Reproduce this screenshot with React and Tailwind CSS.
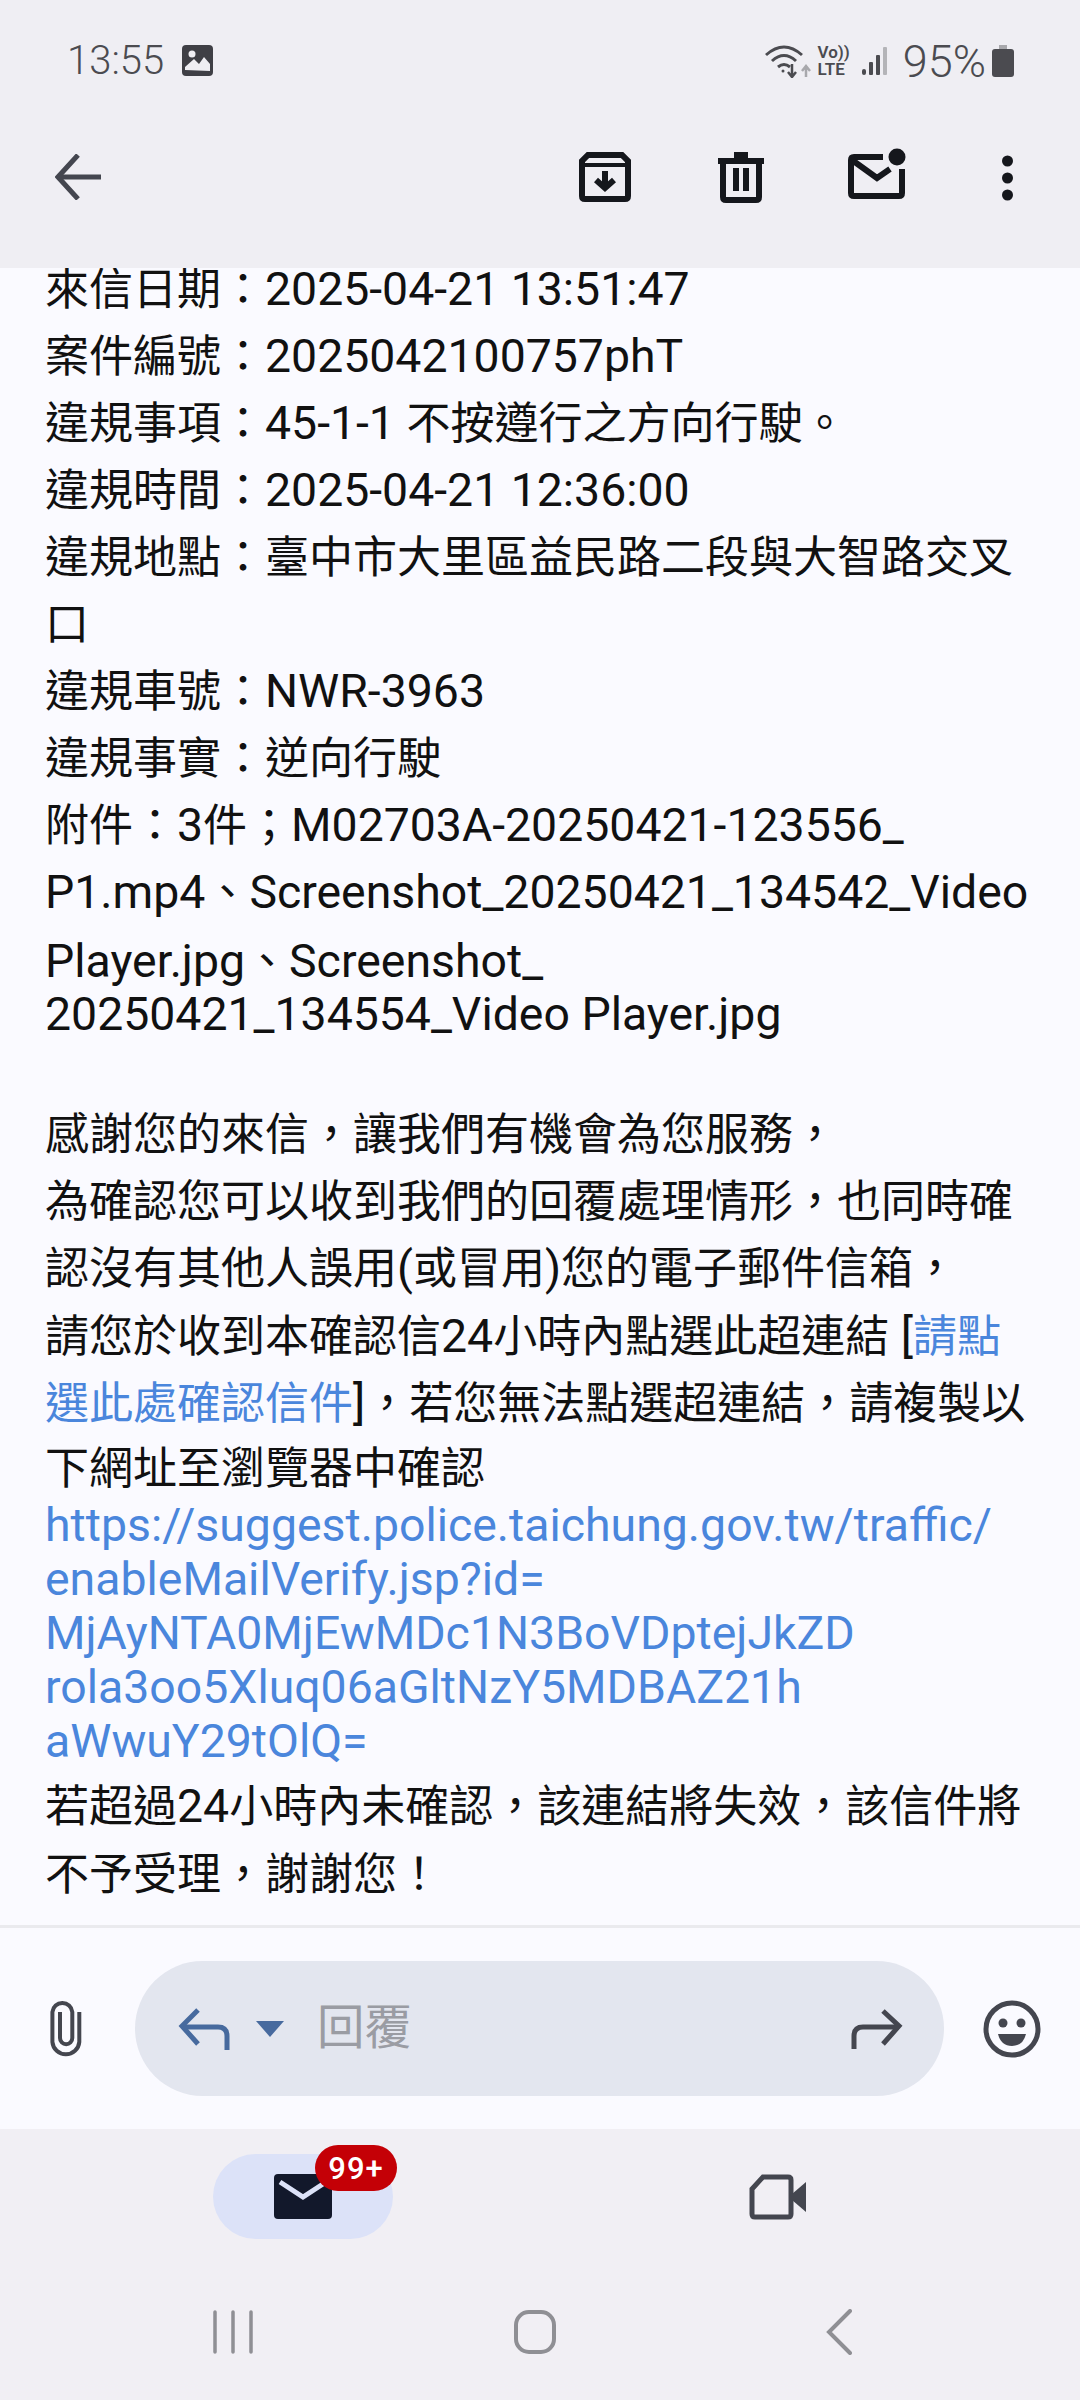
import React from 'react';

const lines = [
  { h: 'h-[67px]', t: '來信日期：2025-04-21 13:51:47' },
  { h: 'h-[67px]', t: '案件編號：2025042100757phT' },
  { h: 'h-[67px]', t: '違規事項：45-1-1 不按遵行之方向行駛。' },
  { h: 'h-[67px]', t: '違規時間：2025-04-21 12:36:00' },
  { h: 'h-[67px]', t: '違規地點：臺中市大里區益民路二段與大智路交叉' },
  { h: 'h-[67px]', t: '口' },
  { h: 'h-[67px]', t: '違規車號：NWR-3963' },
  { h: 'h-[67px]', t: '違規事實：逆向行駛' },
  { h: 'h-[67px]', t: '附件：3件；M02703A-20250421-123556_' },
  { h: 'h-[67px]', t: 'P1.mp4、Screenshot_20250421_134542_Video' },
  { h: 'h-[71px]', t: 'Player.jpg、Screenshot_' },
  { h: 'h-[36px]', t: '20250421_134554_Video Player.jpg' },
  { h: 'h-[68px]', t: '' },
  { h: 'h-[67px]', t: '感謝您的來信，讓我們有機會為您服務，' },
  { h: 'h-[67px]', t: '為確認您可以收到我們的回覆處理情形，也同時確' },
  { h: 'h-[68px]', t: '認沒有其他人誤用(或冒用)您的電子郵件信箱，' },
];

const links = [
  'https://suggest.police.taichung.gov.tw/traffic/',
  'enableMailVerify.jsp?id=',
  'MjAyNTA0MjEwMDc1N3BoVDptejJkZD',
  'rola3oo5Xluq06aGltNzY5MDBAZ21h',
  'aWwuY29tOlQ=',
];

// latin runs are drawn a bit larger than the CJK ones in this mail font
const Mixed = ({ t }) =>
  t.split(/([\x20-\x7e]+)/).map((part, i) =>
    i % 2 ? <span key={i} className="text-[46.4px]">{part}</span> : part
  );

function Header() {
  return (
    <div className="h-[268px] shrink-0 bg-[#efeef3]">
      <div className="flex h-[120px] items-center pl-[67px] pr-[66px] pt-[2px] text-[#4b4b50]">
        <span className="text-[40px] font-light leading-none">13:55</span>
        <svg className="ml-[18px]" width="32" height="32" viewBox="0 0 32 32">
          <rect width="31" height="31" x="0" y="0" rx="4" fill="#3f3f45" />
          <circle cx="10" cy="9" r="3.5" fill="#efeef3" />
          <path d="M3 25 L3 22 L12 14 L17 19 L22 12 L28 19 L28 26 Z" fill="#efeef3" />
        </svg>
        <div className="ml-auto flex items-center">
          <svg width="46" height="34" viewBox="0 0 46 34" fill="none" stroke="#4b4b50" strokeWidth="3">
            <path d="M1 11 Q19 -5 37 11" />
            <path d="M7 17 Q19 6 31 17" />
            <path d="M13 23 Q19 18 25 23" />
            <circle cx="18" cy="27" r="1.5" fill="#4b4b50" stroke="none" />
            <path d="M27 20 V32 M23 28 L27 33 L31 28" strokeWidth="2.5" />
            <path d="M41 33 V23 M37 27 L41 22 L45 27" stroke="#a8a8ac" strokeWidth="2.5" />
          </svg>
          <div className="ml-[7px] flex flex-col text-[17px] font-semibold leading-[17px]">
            <span>Vo))</span>
            <span>LTE</span>
          </div>
          <svg className="ml-[12px]" width="28" height="32" viewBox="0 0 28 32">
            <rect x="0" y="24" width="4" height="6" rx="2" fill="#4b4b50" />
            <rect x="7" y="17" width="4" height="13" rx="1" fill="#4b4b50" />
            <rect x="14" y="10" width="4" height="20" rx="1" fill="#4b4b50" />
            <rect x="21" y="2" width="4" height="28" rx="1" fill="#b4b4b8" />
          </svg>
          <span className="ml-[13px] text-[45px] font-light leading-none">95%</span>
          <svg className="ml-[6px]" width="22" height="32" viewBox="0 0 22 32">
            <rect x="7" y="0" width="8" height="5" fill="#a8a8ac" />
            <rect x="0" y="4" width="22" height="28" rx="3" fill="#4b4b50" />
          </svg>
        </div>
      </div>
      <div className="flex h-[114px] items-center pl-[55px]">
        <svg width="46" height="46" viewBox="0 0 46 46" fill="none" stroke="#44464f" strokeWidth="5">
          <path d="M23 1 L3 23 L23 45" />
          <path d="M3 23 H46" />
        </svg>
        <svg className="ml-[478px]" width="52" height="50" viewBox="0 0 52 50" fill="none" stroke="#15171c" strokeWidth="6">
          <path d="M9 3 H43 L49 9 V44 Q49 47 46 47 H6 Q3 47 3 44 V9 Z" />
          <path d="M3 13 H49" strokeWidth="4" />
          <path d="M26 19 V34" />
          <path d="M17 28 L26 36 L35 28" />
        </svg>
        <svg className="ml-[86px]" width="48" height="52" viewBox="0 0 48 52" fill="none" stroke="#15171c" strokeWidth="6">
          <path d="M1 10 H47" />
          <path d="M17 4 H31" />
          <path d="M6 10 V46 Q6 49 9 49 H39 Q42 49 42 46 V10" />
          <path d="M19 17 V40 M29 17 V40" />
        </svg>
        <svg className="mb-[6px] ml-[83px]" width="58" height="52" viewBox="0 0 58 52" fill="none" stroke="#15171c" strokeWidth="6">
          <path d="M35 9 H6 Q3 9 3 12 V45 Q3 48 6 48 H51 Q54 48 54 45 V21" />
          <path d="M4 12 L29 30 L42 21" />
          <circle cx="49" cy="9" r="8.5" fill="#15171c" stroke="none" />
        </svg>
        <svg className="ml-[95px] mt-[2px]" width="13" height="46" viewBox="0 0 13 46" fill="#15171c">
          <circle cx="6.5" cy="6" r="5.5" />
          <circle cx="6.5" cy="23" r="5.5" />
          <circle cx="6.5" cy="40" r="5.5" />
        </svg>
      </div>
    </div>
  );
}

function Body() {
  return (
    <div className="h-[1660px] shrink-0 overflow-hidden border-b-[3px] border-[#eaeaee] bg-[#fafaff] pl-[45px] text-[44px] text-[#111111]">
      <div className="-mt-[12px] whitespace-nowrap">
        {lines.map((l, i) => (
          <div key={i} className={`${l.h} flex items-center`}>
            <span><Mixed t={l.t} /></span>
          </div>
        ))}
        <div className="flex h-[67px] items-center">
          <span>
            <Mixed t="請您於收到本確認信24小時內點選此超連結 [" />
            <span className="text-[#4a86dc]">請點</span>
          </span>
        </div>
        <div className="flex h-[68px] items-center">
          <span>
            <span className="text-[#4a86dc]">選此處確認信件</span>
            <Mixed t="]" />，若您無法點選超連結，請複製以
          </span>
        </div>
        <div className="flex h-[61px] items-center">下網址至瀏覽器中確認</div>
        {links.map((l) => (
          <div key={l} className="flex h-[54px] items-center text-[46.4px] text-[#4a86dc]">{l}</div>
        ))}
        <div className="flex h-[72px] items-center pt-[4px]">
          <span><Mixed t="若超過24小時內未確認，該連結將失效，該信件將" /></span>
        </div>
        <div className="flex h-[67px] items-center">不予受理，謝謝您！</div>
      </div>
    </div>
  );
}

function ReplyBar() {
  return (
    <div className="flex h-[201px] shrink-0 items-center bg-[#fafaff]">
      <svg className="ml-[50px]" width="32" height="56" viewBox="0 0 32 56" fill="none" stroke="#44464f" strokeWidth="4">
        <path d="M29.3 11 V41 A13.5 13.5 0 0 1 2.4 41 V11 A10 10 0 0 1 22.3 11 V37 A6 6 0 0 1 10 37 V11" />
      </svg>
      <div className="ml-[53px] flex h-[135px] w-[809px] items-center rounded-[68px] bg-[#e3e6ef] pl-[43px] pr-[41px]">
        <svg width="52" height="42" viewBox="0 0 52 42" fill="none" stroke="#476a9e" strokeWidth="5">
          <path d="M20 2 L4 18 L20 36" />
          <path d="M4 19 H40 Q49 19 49 28 V42" />
        </svg>
        <svg className="ml-[26px]" width="28" height="16" viewBox="0 0 28 16" fill="#476a9e">
          <path d="M0 0 H28 L14 16 Z" />
        </svg>
        <span className="ml-[33px] text-[47.5px] text-[#9a9ca3]">回覆</span>
        <svg className="ml-auto" width="52" height="40" viewBox="0 0 52 40" fill="none" stroke="#44464f" strokeWidth="5">
          <path d="M32 2 L48 17 L32 35" />
          <path d="M48 18 H12 Q3 18 3 27 V40" />
        </svg>
      </div>
      <svg className="ml-[39px]" width="58" height="58" viewBox="0 0 58 58" fill="none" stroke="#44464f" strokeWidth="5">
        <circle cx="29" cy="29" r="26" />
        <circle cx="20" cy="23" r="4.5" fill="#44464f" stroke="none" />
        <circle cx="38" cy="23" r="4.5" fill="#44464f" stroke="none" />
        <path d="M15 34 H43 Q40 46 29 46 Q18 46 15 34 Z" fill="#44464f" stroke="none" />
      </svg>
    </div>
  );
}

function BottomNav() {
  return (
    <div className="flex-1 bg-[#f1eff4]">
      <div className="flex h-[152px] items-start pl-[213px] pt-[25px]">
        <div className="relative flex h-[85px] w-[180px] items-center justify-center rounded-[43px] bg-[#dce2f8]">
          <svg width="58" height="45" viewBox="0 0 58 45">
            <rect width="58" height="45" rx="4" fill="#12182b" />
            <path d="M6 8 L29 23 L52 8" fill="none" stroke="#dce2f8" strokeWidth="5" />
          </svg>
          <div className="absolute -top-[9px] left-[102px] flex h-[46px] w-[82px] items-center justify-center rounded-[23px] bg-[#c40006] text-[31px] font-medium leading-none tracking-[1px] text-white">
            99+
          </div>
        </div>
        <svg className="ml-[356px] mt-[20px]" width="58" height="46" viewBox="0 0 58 46" fill="none" stroke="#44464f" strokeWidth="5">
          <path d="M14 3 H39 Q42 3 42 6 V40 Q42 43 39 43 H6 Q3 43 3 40 V15 Z" />
          <path d="M43 20 L57 8 V38 L43 26 Z" fill="#44464f" stroke="none" />
        </svg>
      </div>
      <div className="flex items-center pl-[213px] pt-[28px]">
        <svg width="40" height="44" viewBox="0 0 40 44" stroke="#8f8f94" strokeWidth="3.5" strokeLinecap="round">
          <path d="M2 2 V42 M20 2 V42 M38 2 V42" />
        </svg>
        <svg className="ml-[261px]" width="42" height="44" viewBox="0 0 42 44" fill="none" stroke="#8f8f94" strokeWidth="4">
          <rect x="2" y="2" width="38" height="40" rx="13" />
        </svg>
        <svg className="ml-[270px]" width="26" height="46" viewBox="0 0 26 46" fill="none" stroke="#8f8f94" strokeWidth="4" strokeLinecap="round">
          <path d="M24 2 L3 23 L24 44" />
        </svg>
      </div>
    </div>
  );
}

export default function App() {
  return (
    <div className="flex h-[2400px] w-[1080px] flex-col overflow-hidden font-[Roboto,'Noto_Sans_CJK_TC',sans-serif]">
      <Header />
      <Body />
      <ReplyBar />
      <BottomNav />
    </div>
  );
}
